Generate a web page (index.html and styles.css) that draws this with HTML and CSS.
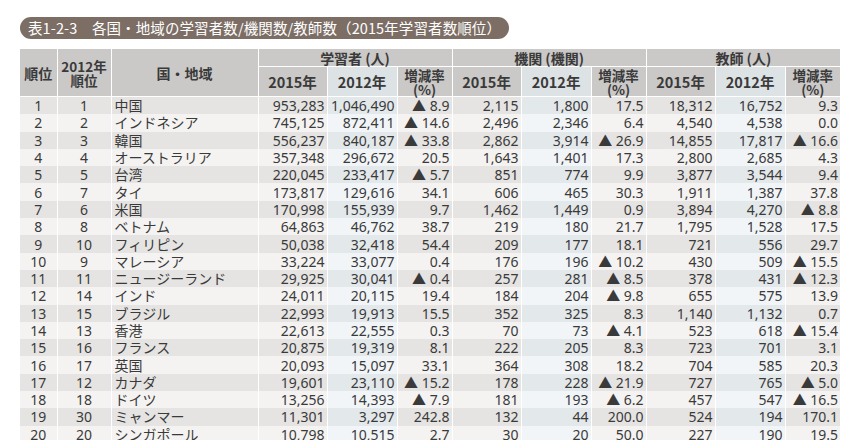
FILE: index.html
```html
<!DOCTYPE html>
<html lang="ja">
<head>
<meta charset="utf-8">
<link rel="stylesheet" href="styles.css">
</head>
<body>
<div class="page">
  <div class="title">表1-2-3　各国・地域の学習者数/機関数/教師数（2015年学習者数順位）</div>
  <table class="data">
    <colgroup>
      <col class="c-rank"><col class="c-rank2"><col class="c-name">
      <col class="c-a"><col class="c-b"><col class="c-r">
      <col class="c-a"><col class="c-b"><col class="c-r">
      <col class="c-a"><col class="c-b"><col class="c-r">
    </colgroup>
    <thead>
      <tr class="h1">
        <th rowspan="2">順位</th>
        <th rowspan="2" class="two">2012年<br>順位</th>
        <th rowspan="2">国・地域</th>
        <th colspan="3">学習者 (人)</th>
        <th colspan="3">機関 (機関)</th>
        <th colspan="3">教師 (人)</th>
      </tr>
      <tr class="h2">
        <th>2015年</th><th class="b">2012年</th><th class="two">増減率<br>(%)</th>
        <th>2015年</th><th class="b">2012年</th><th class="two">増減率<br>(%)</th>
        <th>2015年</th><th class="b">2012年</th><th class="two">増減率<br>(%)</th>
      </tr>
    </thead>
    <tbody id="rows">
      <tr><td>1</td><td>1</td><td>中国</td><td>953,283</td><td class="b">1,046,490</td><td>▲ 8.9</td><td>2,115</td><td class="b">1,800</td><td>17.5</td><td>18,312</td><td class="b">16,752</td><td>9.3</td></tr>
      <tr><td>2</td><td>2</td><td>インドネシア</td><td>745,125</td><td class="b">872,411</td><td>▲ 14.6</td><td>2,496</td><td class="b">2,346</td><td>6.4</td><td>4,540</td><td class="b">4,538</td><td>0.0</td></tr>
      <tr><td>3</td><td>3</td><td>韓国</td><td>556,237</td><td class="b">840,187</td><td>▲ 33.8</td><td>2,862</td><td class="b">3,914</td><td>▲ 26.9</td><td>14,855</td><td class="b">17,817</td><td>▲ 16.6</td></tr>
      <tr><td>4</td><td>4</td><td>オーストラリア</td><td>357,348</td><td class="b">296,672</td><td>20.5</td><td>1,643</td><td class="b">1,401</td><td>17.3</td><td>2,800</td><td class="b">2,685</td><td>4.3</td></tr>
      <tr><td>5</td><td>5</td><td>台湾</td><td>220,045</td><td class="b">233,417</td><td>▲ 5.7</td><td>851</td><td class="b">774</td><td>9.9</td><td>3,877</td><td class="b">3,544</td><td>9.4</td></tr>
      <tr><td>6</td><td>7</td><td>タイ</td><td>173,817</td><td class="b">129,616</td><td>34.1</td><td>606</td><td class="b">465</td><td>30.3</td><td>1,911</td><td class="b">1,387</td><td>37.8</td></tr>
      <tr><td>7</td><td>6</td><td>米国</td><td>170,998</td><td class="b">155,939</td><td>9.7</td><td>1,462</td><td class="b">1,449</td><td>0.9</td><td>3,894</td><td class="b">4,270</td><td>▲ 8.8</td></tr>
      <tr><td>8</td><td>8</td><td>ベトナム</td><td>64,863</td><td class="b">46,762</td><td>38.7</td><td>219</td><td class="b">180</td><td>21.7</td><td>1,795</td><td class="b">1,528</td><td>17.5</td></tr>
      <tr><td>9</td><td>10</td><td>フィリピン</td><td>50,038</td><td class="b">32,418</td><td>54.4</td><td>209</td><td class="b">177</td><td>18.1</td><td>721</td><td class="b">556</td><td>29.7</td></tr>
      <tr><td>10</td><td>9</td><td>マレーシア</td><td>33,224</td><td class="b">33,077</td><td>0.4</td><td>176</td><td class="b">196</td><td>▲ 10.2</td><td>430</td><td class="b">509</td><td>▲ 15.5</td></tr>
      <tr><td>11</td><td>11</td><td>ニュージーランド</td><td>29,925</td><td class="b">30,041</td><td>▲ 0.4</td><td>257</td><td class="b">281</td><td>▲ 8.5</td><td>378</td><td class="b">431</td><td>▲ 12.3</td></tr>
      <tr><td>12</td><td>14</td><td>インド</td><td>24,011</td><td class="b">20,115</td><td>19.4</td><td>184</td><td class="b">204</td><td>▲ 9.8</td><td>655</td><td class="b">575</td><td>13.9</td></tr>
      <tr><td>13</td><td>15</td><td>ブラジル</td><td>22,993</td><td class="b">19,913</td><td>15.5</td><td>352</td><td class="b">325</td><td>8.3</td><td>1,140</td><td class="b">1,132</td><td>0.7</td></tr>
      <tr><td>14</td><td>13</td><td>香港</td><td>22,613</td><td class="b">22,555</td><td>0.3</td><td>70</td><td class="b">73</td><td>▲ 4.1</td><td>523</td><td class="b">618</td><td>▲ 15.4</td></tr>
      <tr><td>15</td><td>16</td><td>フランス</td><td>20,875</td><td class="b">19,319</td><td>8.1</td><td>222</td><td class="b">205</td><td>8.3</td><td>723</td><td class="b">701</td><td>3.1</td></tr>
      <tr><td>16</td><td>17</td><td>英国</td><td>20,093</td><td class="b">15,097</td><td>33.1</td><td>364</td><td class="b">308</td><td>18.2</td><td>704</td><td class="b">585</td><td>20.3</td></tr>
      <tr><td>17</td><td>12</td><td>カナダ</td><td>19,601</td><td class="b">23,110</td><td>▲ 15.2</td><td>178</td><td class="b">228</td><td>▲ 21.9</td><td>727</td><td class="b">765</td><td>▲ 5.0</td></tr>
      <tr><td>18</td><td>18</td><td>ドイツ</td><td>13,256</td><td class="b">14,393</td><td>▲ 7.9</td><td>181</td><td class="b">193</td><td>▲ 6.2</td><td>457</td><td class="b">547</td><td>▲ 16.5</td></tr>
      <tr><td>19</td><td>30</td><td>ミャンマー</td><td>11,301</td><td class="b">3,297</td><td>242.8</td><td>132</td><td class="b">44</td><td>200.0</td><td>524</td><td class="b">194</td><td>170.1</td></tr>
      <tr><td>20</td><td>20</td><td>シンガポール</td><td>10,798</td><td class="b">10,515</td><td>2.7</td><td>30</td><td class="b">20</td><td>50.0</td><td>227</td><td class="b">190</td><td>19.5</td></tr>
    </tbody>
  </table>
</div>
</body>
</html>
```

FILE: styles.css
```css
html, body {
  margin: 0;
  padding: 0;
  background: #ffffff;
}
body {
  font-family: "Noto Sans", "Noto Sans CJK JP", sans-serif;
  color: #3a3a3a;
}
.page {
  padding: 17px 0 0 20px;
}
.title {
  display: inline-block;
  height: 22px;
  line-height: 22px;
  padding: 0 8px 0 8px;
  border-radius: 11px;
  background: #7c6e65;
  color: #ffffff;
  font-family: "Noto Sans CJK JP", sans-serif;
  font-size: 14.5px;
  letter-spacing: 0.1px;
  white-space: nowrap;
}
.data {
  margin-top: 10px;
  border-collapse: collapse;
  table-layout: fixed;
  width: 817px;
  font-size: 14px;
}
.c-rank { width: 37px; }
.c-rank2 { width: 54px; }
.c-name { width: 147px; }
.c-a { width: 69px; }
.c-b { width: 70px; }
.c-r { width: 55px; }
.data th {
  background: #cac9c7;
  font-family: "Noto Sans CJK JP", sans-serif;
  font-weight: 700;
  font-size: 14px;
  color: #3a3a3a;
  border: 1px solid #ffffff;
  border-top: 0;
  padding: 0;
  line-height: 16px;
}
.data tr.h1 th { height: 17px; }
.data tr.h2 th { height: 29px; font-size: 14.5px; }
.data th.two,
.data tr.h2 th.two {
  font-size: 13.5px;
  line-height: 14px;
}
.data tr.h2 th.b { background: #dde2e5; }
.data tr.h1 th:first-child { border-left: 0; }
.data tr.h1 th:last-child, .data tr.h2 th:last-child { border-right: 0; }
.data td {
  height: 17.3px;
  padding: 0 2px 0 0;
  line-height: 17px;
  text-align: right;
  white-space: nowrap;
  border-right: 1px solid #ffffff;
  background: #f4f3f2;
}
.data td:last-child { border-right: 0; }
.data tbody tr:nth-child(odd) td { background: #e5e4e2; }
.data tbody tr:nth-child(even) td.b { background: #f1f5f7; }
.data tbody tr:nth-child(odd) td.b { background: #e3e8eb; }
.data td:nth-child(1), .data td:nth-child(2) {
  text-align: center;
  padding: 0;
}
.data td:nth-child(3) {
  text-align: left;
  padding-left: 3px;
  font-family: "Noto Sans CJK JP", sans-serif;
}
```
